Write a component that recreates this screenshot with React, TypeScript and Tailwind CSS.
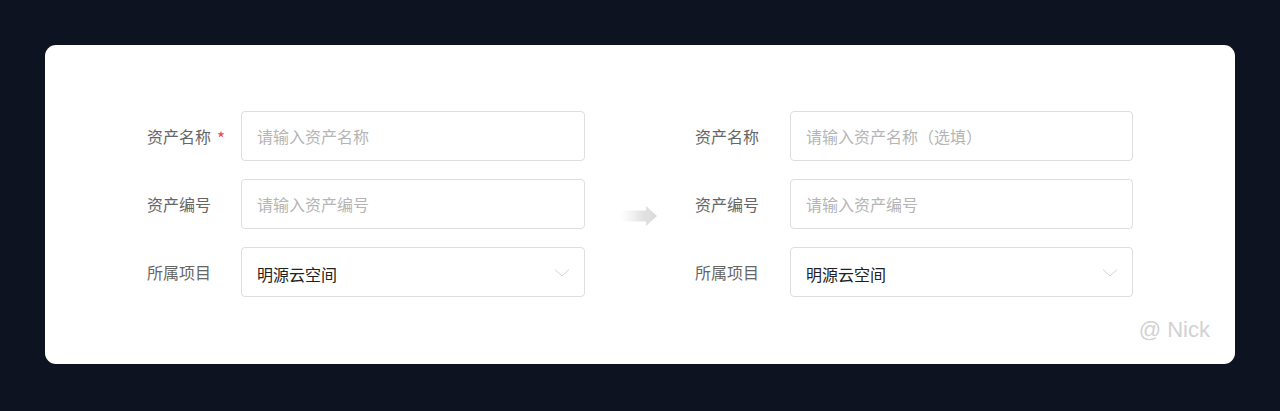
import React from "react";

const font = { fontFamily: '"PingFang SC", "Noto Sans CJK SC", "Noto Sans", sans-serif' };

function Chevron() {
  return (
    <svg width="16" height="10" viewBox="0 0 16 10" fill="none">
      <path d="M1 1.5 L8 8 L15 1.5" stroke="#d6d6d6" strokeWidth="1" />
    </svg>
  );
}

function Row({ label, required, labelW, children }: { label: string; required?: boolean; labelW: string; children: React.ReactNode }) {
  return (
    <div className="flex items-center h-[50px]">
      <div className={`${labelW} shrink-0 text-[16px] text-[#666666] flex items-center`}>
        <span>{label}</span>
        {required && <span className="ml-[6px] text-[#f0454c] text-[17px] leading-none mt-[4px]">*</span>}
      </div>
      {children}
    </div>
  );
}

function Input({ placeholder }: { placeholder: string }) {
  return (
    <div className="flex-1 h-[50px] border border-[#dedede] rounded-[4px] flex items-center pl-[15px] text-[16px] text-[#b5b5b5]">
      {placeholder}
    </div>
  );
}

function Select({ value }: { value: string }) {
  return (
    <div className="flex-1 h-[50px] border border-[#dedede] rounded-[4px] flex items-center justify-between pl-[15px] pr-[14px]">
      <span className="text-[16px] text-[#222222] mt-[5px]">{value}</span>
      <span className="mt-[2px]"><Chevron /></span>
    </div>
  );
}

function Form({ optional }: { optional?: boolean }) {
  const labelW = optional ? "w-[95px]" : "w-[94px]";
  return (
    <div className="w-[438px] shrink-0 flex flex-col gap-[18px]">
      <Row label="资产名称" required={!optional} labelW={labelW}>
        <Input placeholder={optional ? "请输入资产名称（选填）" : "请输入资产名称"} />
      </Row>
      <Row label="资产编号" labelW={labelW}>
        <Input placeholder="请输入资产编号" />
      </Row>
      <Row label="所属项目" labelW={labelW}>
        <Select value="明源云空间" />
      </Row>
    </div>
  );
}

function Arrow() {
  return (
    <svg width="38" height="20" viewBox="0 0 38 20" className="block">
      <defs>
        <linearGradient id="ag" x1="0" x2="1" y1="0" y2="0">
          <stop offset="0" stopColor="#ececec" stopOpacity="0" />
          <stop offset="0.6" stopColor="#e2e2e2" />
          <stop offset="1" stopColor="#dadada" />
        </linearGradient>
      </defs>
      <path d="M0 4.5 H26 V0 L37 10 L26 20 V15.5 H0 Z" fill="url(#ag)" />
    </svg>
  );
}

export default function App() {
  return (
    <div className="w-[1280px] h-[411px] bg-[#0d1320] pt-[45px] px-[45px]" style={font}>
      <div className="relative w-[1190px] h-[319px] bg-white rounded-[11px] flex items-center pl-[102px] pb-[2px]">
        <Form />
        <div className="ml-[35px] mr-[37px] mt-[24px]"><Arrow /></div>
        <Form optional />
        <div className="absolute right-[25px] bottom-[18px] text-[22px] text-[#d2d2d2]" style={{ fontFamily: '"Helvetica Neue", "Liberation Sans", Arial, sans-serif' }}>
          @ Nick
        </div>
      </div>
    </div>
  );
}
